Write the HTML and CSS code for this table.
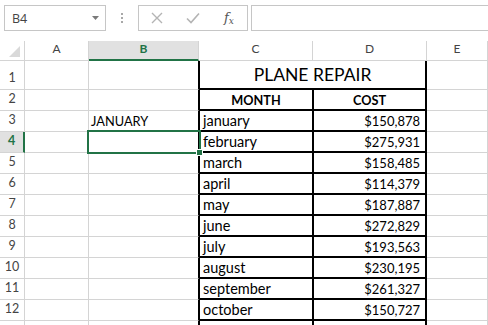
FILE: index.html
```html
<!DOCTYPE html>
<html>
<head>
<meta charset="utf-8">
<title>Plane Repair</title>
<link rel="stylesheet" href="styles.css">
</head>
<body>
<div class="fbar">
  <div class="namebox">
    <span>B4</span>
    <svg class="dd" width="7" height="4" viewBox="0 0 7 4"><path d="M0 0H7L3.5 4Z" fill="#7a7a7a"/></svg>
  </div>
  <div class="grip"><i></i><i></i><i></i></div>
  <div class="fbtns">
    <svg class="ic-x" width="12" height="12" viewBox="0 0 12 12"><path d="M1 1L11 11M11 1L1 11" stroke="#b4b4b4" stroke-width="1.4" fill="none"/></svg>
    <svg class="ic-ok" width="14" height="12" viewBox="0 0 14 12"><path d="M1 6.5L5 10.5L13 1.5" stroke="#b4b4b4" stroke-width="1.6" fill="none"/></svg>
    <span class="fx">f<sub>x</sub></span>
  </div>
  <div class="finput"></div>
</div>

<div class="sheet">
  <div class="c corner"><svg width="11" height="11" viewBox="0 0 11 11"><path d="M11 0V11H0Z" fill="#d9d9d9"/></svg></div>
  <div class="c h">A</div>
  <div class="c h on">B</div>
  <div class="c h">C</div>
  <div class="c h">D</div>
  <div class="c h">E</div>

  <div class="c r">1</div>
  <div class="c"></div>
  <div class="c edge"></div>
  <div class="c tb title">PLANE REPAIR</div>
  <div class="c"></div>

  <div class="c r">2</div>
  <div class="c"></div>
  <div class="c edge"></div>
  <div class="c tb tc mid">MONTH</div>
  <div class="c tb td mid">COST</div>
  <div class="c"></div>

  <div class="c r">3</div>
  <div class="c"></div>
  <div class="c edge t caps">JANUARY</div>
  <div class="c tb tc t">january</div>
  <div class="c tb td t num">$150,878</div>
  <div class="c"></div>

  <div class="c r on">4</div>
  <div class="c"></div>
  <div class="c edge"></div>
  <div class="c tb tc t">february</div>
  <div class="c tb td t num">$275,931</div>
  <div class="c"></div>

  <div class="c r">5</div>
  <div class="c"></div>
  <div class="c edge"></div>
  <div class="c tb tc t">march</div>
  <div class="c tb td t num">$158,485</div>
  <div class="c"></div>

  <div class="c r">6</div>
  <div class="c"></div>
  <div class="c edge"></div>
  <div class="c tb tc t">april</div>
  <div class="c tb td t num">$114,379</div>
  <div class="c"></div>

  <div class="c r">7</div>
  <div class="c"></div>
  <div class="c edge"></div>
  <div class="c tb tc t">may</div>
  <div class="c tb td t num">$187,887</div>
  <div class="c"></div>

  <div class="c r">8</div>
  <div class="c"></div>
  <div class="c edge"></div>
  <div class="c tb tc t">june</div>
  <div class="c tb td t num">$272,829</div>
  <div class="c"></div>

  <div class="c r">9</div>
  <div class="c"></div>
  <div class="c edge"></div>
  <div class="c tb tc t">july</div>
  <div class="c tb td t num">$193,563</div>
  <div class="c"></div>

  <div class="c r">10</div>
  <div class="c"></div>
  <div class="c edge"></div>
  <div class="c tb tc t">august</div>
  <div class="c tb td t num">$230,195</div>
  <div class="c"></div>

  <div class="c r">11</div>
  <div class="c"></div>
  <div class="c edge"></div>
  <div class="c tb tc t">september</div>
  <div class="c tb td t num">$261,327</div>
  <div class="c"></div>

  <div class="c r">12</div>
  <div class="c"></div>
  <div class="c edge"></div>
  <div class="c tb tc t">october</div>
  <div class="c tb td t num">$150,727</div>
  <div class="c"></div>

  <div class="c r"></div>
  <div class="c"></div>
  <div class="c edge"></div>
  <div class="c tb tc t"></div>
  <div class="c tb td t num"></div>
  <div class="c"></div>

  <div class="sel"><i class="handle"></i></div>
</div>
</body>
</html>
```

FILE: styles.css
```css
* { box-sizing: border-box; margin: 0; padding: 0; }
html, body { background: #fff; }
body {
  width: 488px;
  height: 325px;
  overflow: hidden;
  font-family: Lato, "Liberation Sans", sans-serif;
  color: #000;
}

/* formula bar */
.fbar {
  display: flex;
  align-items: flex-start;
  height: 41px;
  padding: 5px 0 0 4px;
  overflow: hidden;
}
.namebox {
  width: 102px;
  height: 26px;
  border: 1px solid #c6c6c6;
  display: flex;
  align-items: center;
  justify-content: space-between;
  padding: 0 6px 0 7px;
  font-family: "Open Sans", sans-serif;
  font-size: 12.5px;
  color: #444;
}
.grip {
  width: 32px;
  height: 26px;
  display: flex;
  flex-direction: column;
  align-items: center;
  justify-content: center;
  gap: 2px;
}
.grip i { display: block; width: 2px; height: 2px; background: #a8a8a8; }
.fbtns {
  width: 110px;
  height: 26px;
  border: 1px solid #c6c6c6;
  display: flex;
  align-items: center;
}
.ic-x { margin-left: 12px; }
.ic-ok { margin-left: 23px; }
.fx {
  margin-left: 24px;
  font-family: "DejaVu Serif", "Liberation Serif", serif;
  font-style: italic;
  font-size: 13px;
  color: #555;
  line-height: 1;
}
.fx sub { font-size: 9px; vertical-align: -2px; }
.finput {
  flex: 1;
  height: 26px;
  border: 1px solid #c6c6c6;
  margin-left: 3px;
  margin-right: -4px;
}

/* sheet grid */
.sheet {
  position: relative;
  display: grid;
  grid-template-columns: 25px 64px 110px 114px 114px 61px;
  grid-template-rows: 20px 29px repeat(12, 21px) 21px;
}
.c {
  border-right: 1px solid #d4d4d4;
  border-bottom: 1px solid #d4d4d4;
  display: flex;
  align-items: flex-end;
  min-width: 0;
  overflow: hidden;
  white-space: nowrap;
  font-size: 14.5px;
  line-height: 18px;
  padding-bottom: 1px;
}
.corner {
  justify-content: flex-end;
  padding: 0 4px 3px 0;
}
.corner svg { display: block; }
.h {
  justify-content: center;
  font-size: 12px;
  color: #444;
  padding-bottom: 2px;
}
.r {
  justify-content: center;
  font-size: 12.5px;
  color: #444;
  padding-bottom: 2px;
}
.h.on {
  background: #e1e1e1;
  color: #217346;
  font-weight: bold;
  border-bottom: 2px solid #217346;
  padding-bottom: 1px;
}
.r.on {
  background: #e1e1e1;
  color: #217346;
  font-weight: bold;
  border-right: 2px solid #217346;
}
.edge { border-right-color: #000; }
.t { padding-left: 3px; padding-right: 3px; }
.caps { font-size: 12.8px; padding-left: 2px; }

/* bordered table */
.tb {
  border-bottom: 2px solid #000;
  padding-bottom: 0;
}
.tc {
  border-left: 1px solid #000;
  border-right: 1px solid #000;
}
.td {
  border-left: 1px solid #000;
  border-right: 2px solid #000;
}
.title {
  grid-column: span 2;
  border-left: 1px solid #000;
  border-right: 2px solid #000;
  justify-content: center;
  font-size: 17.5px;
  line-height: 24px;
  padding-bottom: 1px;
}
.mid {
  justify-content: center;
  font-weight: bold;
  font-size: 12.7px;
}
.num { justify-content: flex-end; padding-right: 5px; font-size: 13px; }

/* selection */
.sel {
  position: absolute;
  left: 87px;
  top: 89px;
  width: 114px;
  height: 24px;
  border: 2px solid #217346;
  pointer-events: none;
}
.handle {
  position: absolute;
  right: -4px;
  bottom: -4px;
  width: 7px;
  height: 7px;
  background: #217346;
  border: 1px solid #fff;
}
```
